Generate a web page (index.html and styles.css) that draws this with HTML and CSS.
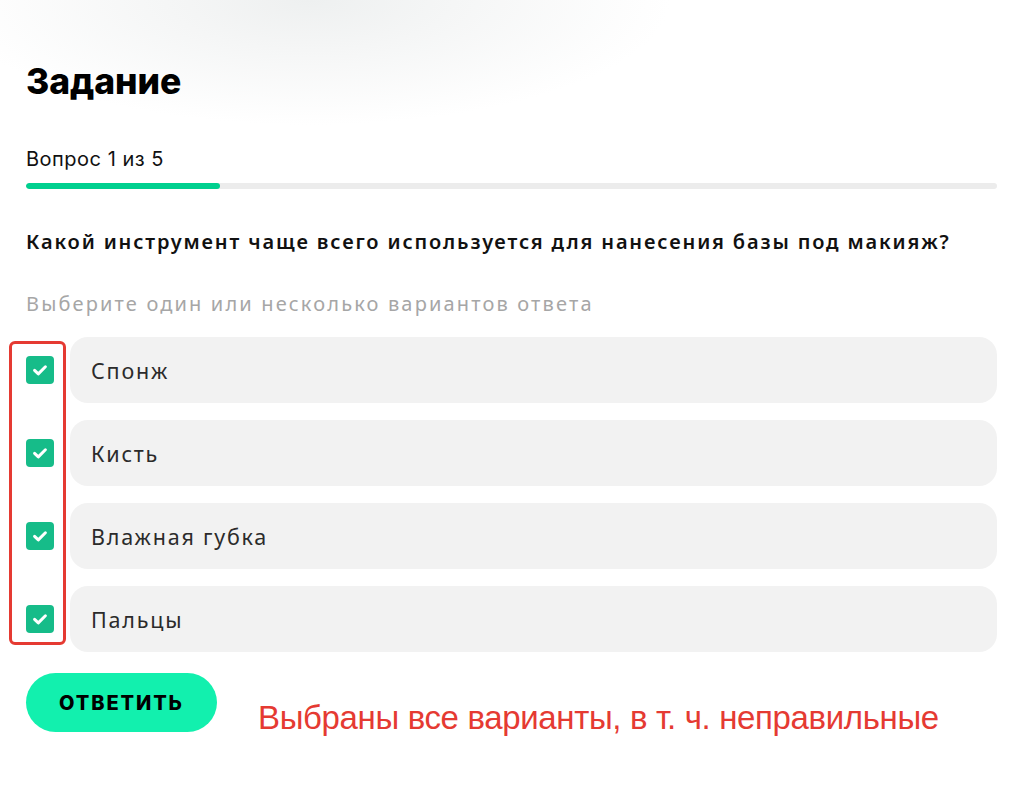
FILE: index.html
```html
<!DOCTYPE html>
<html lang="ru">
<head>
<meta charset="utf-8">
<title>Задание</title>
<link rel="stylesheet" href="styles.css">
</head>
<body>
<div class="page">
  <h1 class="title">Задание</h1>
  <div class="counter">Вопрос 1 из 5</div>
  <div class="progress"><div class="progress-fill" style="width:20%"></div></div>
  <div class="question">Какой инструмент чаще всего используется для нанесения базы под макияж?</div>
  <div class="hint">Выберите один или несколько вариантов ответа</div>
  <div class="options">
    <div class="annot-box"></div>
    <div class="option">
      <span class="check"><svg viewBox="0 0 28 28" width="28" height="28"><path d="M8.6 14.4l3.7 3.5L19.4 10.8" fill="none" stroke="#fff" stroke-width="3" stroke-linecap="round" stroke-linejoin="round"/></svg></span>
      <div class="option-box">Спонж</div>
    </div>
    <div class="option">
      <span class="check"><svg viewBox="0 0 28 28" width="28" height="28"><path d="M8.6 14.4l3.7 3.5L19.4 10.8" fill="none" stroke="#fff" stroke-width="3" stroke-linecap="round" stroke-linejoin="round"/></svg></span>
      <div class="option-box">Кисть</div>
    </div>
    <div class="option">
      <span class="check"><svg viewBox="0 0 28 28" width="28" height="28"><path d="M8.6 14.4l3.7 3.5L19.4 10.8" fill="none" stroke="#fff" stroke-width="3" stroke-linecap="round" stroke-linejoin="round"/></svg></span>
      <div class="option-box">Влажная губка</div>
    </div>
    <div class="option">
      <span class="check"><svg viewBox="0 0 28 28" width="28" height="28"><path d="M8.6 14.4l3.7 3.5L19.4 10.8" fill="none" stroke="#fff" stroke-width="3" stroke-linecap="round" stroke-linejoin="round"/></svg></span>
      <div class="option-box">Пальцы</div>
    </div>
  </div>
  <div class="footer">
    <button class="submit">ОТВЕТИТЬ</button>
    <div class="note">Выбраны все варианты, в т. ч. неправильные</div>
  </div>
</div>
</body>
</html>
```
FILE: styles.css
```css
html, body {
  margin: 0;
  padding: 0;
}
body {
  width: 1016px;
  height: 796px;
  overflow: hidden;
  background:
    radial-gradient(ellipse 360px 125px at 310px 0px, #eef0f0 0%, #f5f6f6 40%, rgba(255,255,255,0) 100%),
    #ffffff;
  font-family: "Noto Sans", "Open Sans", sans-serif;
  color: #111;
}
.page {
  padding: 60px 19px 0 26px;
}
.title {
  margin: 0;
  font-family: "Inter", "Noto Sans", sans-serif;
  font-weight: 800;
  font-size: 35.5px;
  line-height: 44px;
  letter-spacing: -0.1px;
  color: #000;
}
.counter {
  margin-top: 42px;
  font-family: "Inter", "Noto Sans", sans-serif;
  font-size: 20px;
  line-height: 26px;
  letter-spacing: 0.5px;
  color: #111;
}
.progress {
  margin-top: 11px;
  height: 6px;
  background: #ececec;
  border-radius: 3px;
  overflow: hidden;
}
.progress-fill {
  height: 100%;
  background: #00d08f;
  border-radius: 3px;
}
.question {
  margin-top: 40px;
  font-family: "Noto Sans", sans-serif;
  font-weight: 600;
  font-size: 20px;
  line-height: 26px;
  letter-spacing: 1.85px;
  color: #111;
}
.hint {
  margin-top: 36px;
  font-family: "Noto Sans", sans-serif;
  font-size: 20px;
  line-height: 26px;
  letter-spacing: 2.15px;
  color: #a6a6a6;
}
.options {
  position: relative;
  margin-top: 20px;
  display: flex;
  flex-direction: column;
  gap: 17px;
}
.annot-box {
  position: absolute;
  left: -17px;
  top: 4px;
  width: 51px;
  height: 298px;
  border: 3px solid #e53a32;
  border-radius: 6px;
}
.option {
  display: flex;
  align-items: center;
  gap: 16px;
}
.check {
  width: 28px;
  height: 28px;
  flex: 0 0 28px;
  background: #16bc89;
  border-radius: 4px;
  display: flex;
}
.option-box {
  flex: 1;
  height: 66px;
  display: flex;
  align-items: center;
  padding-left: 21px;
  background: #f2f2f2;
  border-radius: 18px;
  font-family: "Noto Sans", sans-serif;
  font-size: 21.5px;
  letter-spacing: 1.8px;
  color: #2b2b2b;
}
.footer {
  margin-top: 21px;
  display: flex;
  align-items: flex-start;
}
.submit {
  width: 191px;
  height: 59px;
  border: none;
  border-radius: 30px;
  background: #12f0ae;
  font-family: "Inter", "Noto Sans", sans-serif;
  font-weight: 800;
  font-size: 20px;
  letter-spacing: 1.9px;
  color: #000;
  padding: 0;
}
.note {
  margin-left: 41px;
  margin-top: 27px;
  font-family: "Liberation Sans", Arial, sans-serif;
  font-size: 33px;
  line-height: 36px;
  color: #e53a32;
  letter-spacing: -0.35px;
}
```
